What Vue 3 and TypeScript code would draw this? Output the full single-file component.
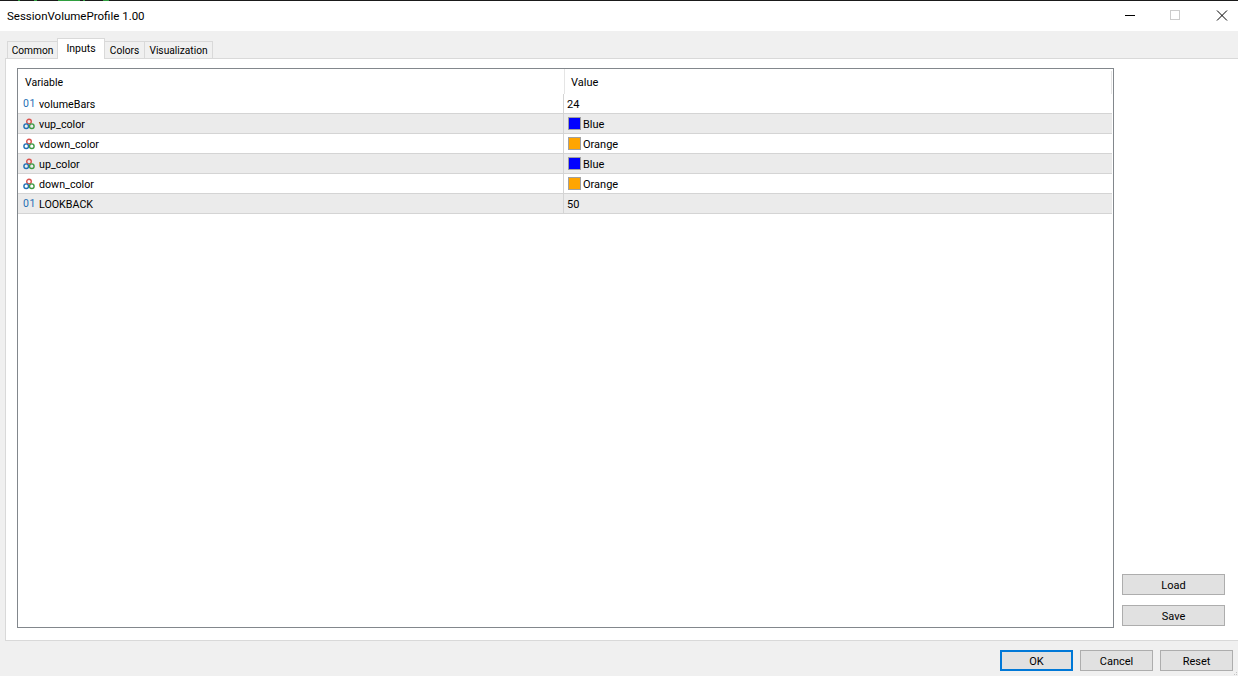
<script setup lang="ts">
interface Row { name: string; kind: 'num' | 'color'; value: string; swatch?: string }
const rows: Row[] = [
  { name: 'volumeBars', kind: 'num', value: '24' },
  { name: 'vup_color', kind: 'color', value: 'Blue', swatch: '#0000ff' },
  { name: 'vdown_color', kind: 'color', value: 'Orange', swatch: '#ffa500' },
  { name: 'up_color', kind: 'color', value: 'Blue', swatch: '#0000ff' },
  { name: 'down_color', kind: 'color', value: 'Orange', swatch: '#ffa500' },
  { name: 'LOOKBACK', kind: 'num', value: '50' },
]
const tabs = [
  { label: 'Common', width: 51 },
  { label: 'Inputs', width: 48 },
  { label: 'Colors', width: 40 },
  { label: 'Visualization', width: 68 },
]
</script>

<template>
  <div class="win">
    <div class="edge"></div>
    <div class="titlebar">
      <span class="title">SessionVolumeProfile 1.00</span>
      <div class="controls">
        <svg class="ctl" width="46" height="30" viewBox="0 0 46 30"><path d="M18 14.5h10" stroke="#000" fill="none" /></svg>
        <svg class="ctl" width="46" height="30" viewBox="0 0 46 30"><rect x="17.5" y="9.5" width="9" height="9" stroke="#ccc" fill="none" /></svg>
        <svg class="ctl" width="46" height="30" viewBox="0 0 46 30"><path d="M18 9.5l10 10M28 9.5l-10 10" stroke="#000" fill="none" /></svg>
      </div>
    </div>
    <div class="body">
      <div class="tabs">
        <div
          v-for="t in tabs"
          :key="t.label"
          class="tab"
          :class="{ active: t.label === 'Inputs' }"
          :style="{ width: t.width + 'px' }"
        >{{ t.label }}</div>
      </div>
      <div class="panel">
        <div class="table">
          <div class="head">
            <div class="hc c1">Variable</div>
            <div class="hc c2">Value</div>
            <span class="head-end"></span>
          </div>
          <div v-for="(r, i) in rows" :key="r.name" class="row" :class="{ alt: i % 2 === 1 }">
            <div class="cell c1">
              <span v-if="r.kind === 'num'" class="num">01</span>
              <svg v-else class="rgb" width="12" height="12" viewBox="0 0 12 12">
                <circle cx="6" cy="3.6" r="2.3" fill="none" stroke="#d9534f" stroke-width="1.4" />
                <circle cx="3.2" cy="8.2" r="2.3" fill="none" stroke="#1f6fb5" stroke-width="1.4" />
                <circle cx="8.8" cy="8.2" r="2.3" fill="none" stroke="#3f9a45" stroke-width="1.4" />
              </svg>
              <span class="name">{{ r.name }}</span>
            </div>
            <div class="cell c2">
              <span v-if="r.swatch" class="swatch" :style="{ background: r.swatch }"></span>
              <span class="val">{{ r.value }}</span>
            </div>
          </div>
        </div>
        <div class="side">
          <button class="btn">Load</button>
          <button class="btn">Save</button>
        </div>
      </div>
      <div class="footer">
        <button class="btn foot ok">OK</button>
        <button class="btn foot">Cancel</button>
        <button class="btn foot">Reset</button>
      </div>
    </div>
    <svg class="grip" width="4" height="4" viewBox="0 0 4 4">
      <rect x="2" y="0" width="1" height="1" fill="#c4c4c4" />
      <rect x="0" y="2" width="1" height="1" fill="#c4c4c4" />
      <rect x="2" y="2" width="1" height="1" fill="#c4c4c4" />
    </svg>
  </div>
</template>

<style>
html, body { margin: 0; padding: 0; background: #f0f0f0; }
</style>

<style scoped>
.win {
  position: relative;
  width: 1238px;
  height: 676px;
  display: flex;
  flex-direction: column;
  font-family: Roboto, "Liberation Sans", sans-serif;
  font-size: 11px;
  color: #000;
  overflow: hidden;
  background: #f0f0f0;
}
.edge {
  height: 1px;
  flex: none;
  background:
    linear-gradient(#2f9e3f, #2f9e3f) 18px 0 / 2px 1px no-repeat,
    linear-gradient(#2f9e3f, #2f9e3f) 34px 0 / 3px 1px no-repeat,
    linear-gradient(#2f9e3f, #2f9e3f) 58px 0 / 22px 1px no-repeat,
    linear-gradient(#2f9e3f, #2f9e3f) 83px 0 / 2px 1px no-repeat,
    linear-gradient(#2f9e3f, #2f9e3f) 103px 0 / 6px 1px no-repeat,
    #1a1a1a;
}
.titlebar {
  height: 30px;
  flex: none;
  background: #fff;
  display: flex;
  align-items: center;
  justify-content: space-between;
}
.title { font-size: 11.5px; margin-left: 7px; }
.controls { display: flex; margin-right: -7px; }
.ctl { display: block; }
.body {
  flex: 1;
  display: flex;
  flex-direction: column;
  padding: 7px 0 0 5px;
  min-height: 0;
}
.tabs { display: flex; height: 20px; padding-left: 2px; flex: none; position: relative; z-index: 1; }
.tab {
  height: 17px;
  margin-top: 3px;
  line-height: 17px;
  font-size: 10.2px;
  text-align: center;
  border: 1px solid #d9d9d9;
  border-bottom: none;
  border-left-width: 0;
  background: #f0f0f0;
  box-sizing: border-box;
}
.tab:first-child { border-left-width: 1px; }
.tab.active {
  background: #fff;
  margin-top: 0;
  height: 21px;
  line-height: 19px;
  font-size: 10.5px;
  border-left-width: 1px;
  margin-left: -1px;
}
.panel {
  flex: none;
  height: 583px;
  background: #fff;
  border: 1px solid #d9d9d9;
  border-right: none;
  display: flex;
  padding: 9px 12px 12px 11px;
  box-sizing: border-box;
  gap: 8px;
}
.table {
  width: 1097px;
  height: 560px;
  box-sizing: border-box;
  border: 1px solid #82878c;
  flex: none;
}
.head { display: flex; height: 25px; position: relative; }
.hc { line-height: 28px; padding-left: 7px; box-sizing: border-box; }
.hc.c1 { font-size: 10.5px; }
.hc.c2 { padding-left: 6px; border-left: 1px solid #e5e5e5; }
.head-end {
  position: absolute;
  right: 1px;
  top: 2px;
  bottom: 0;
  width: 1px;
  background: #e5e5e5;
}
.c1 { width: 546px; flex: none; box-sizing: border-box; }
.c2 { flex: 1; }
.row {
  display: flex;
  height: 20px;
  box-sizing: border-box;
  border-bottom: 1px solid #d4d4d4;
  margin-right: 1px;
}
.row.alt { background: #ebebeb; }
.row .cell { display: flex; align-items: center; }
.row .c1 { padding-left: 5px; border-right: 1px solid #d4d4d4; }
.row .c2 { padding-left: 3px; }
.name { font-size: 10.7px; padding-top: 2px; }
.val { padding-top: 2px; }
.num {
  width: 16px;
  font-size: 10.5px;
  letter-spacing: 0.6px;
  color: #1f6fb5;
  line-height: 1;
  padding-top: 2px;
}
.rgb { width: 12px; margin-right: 4px; flex: none; }
.swatch {
  width: 13px;
  height: 13px;
  box-sizing: border-box;
  border: 1px solid #a0a0a0;
  margin: 0 2px 0 1px;
  flex: none;
}
.side {
  flex: 1;
  display: flex;
  flex-direction: column;
  justify-content: flex-end;
  gap: 10px;
  padding-bottom: 2px;
}
.btn {
  display: block;
  font: inherit;
  color: #000;
  background: #e1e1e1;
  border: 1px solid #adadad;
  padding: 2px 0 0;
  width: 103px;
  height: 21px;
  box-sizing: border-box;
}
.footer {
  flex: 1;
  display: flex;
  justify-content: flex-end;
  gap: 7px;
  padding: 9px 5px 0 0;
}
.foot { width: 73px; height: 21px; }
.ok { border: 2px solid #0078d7; }
.grip { position: absolute; right: 0; bottom: 0; }
</style>
